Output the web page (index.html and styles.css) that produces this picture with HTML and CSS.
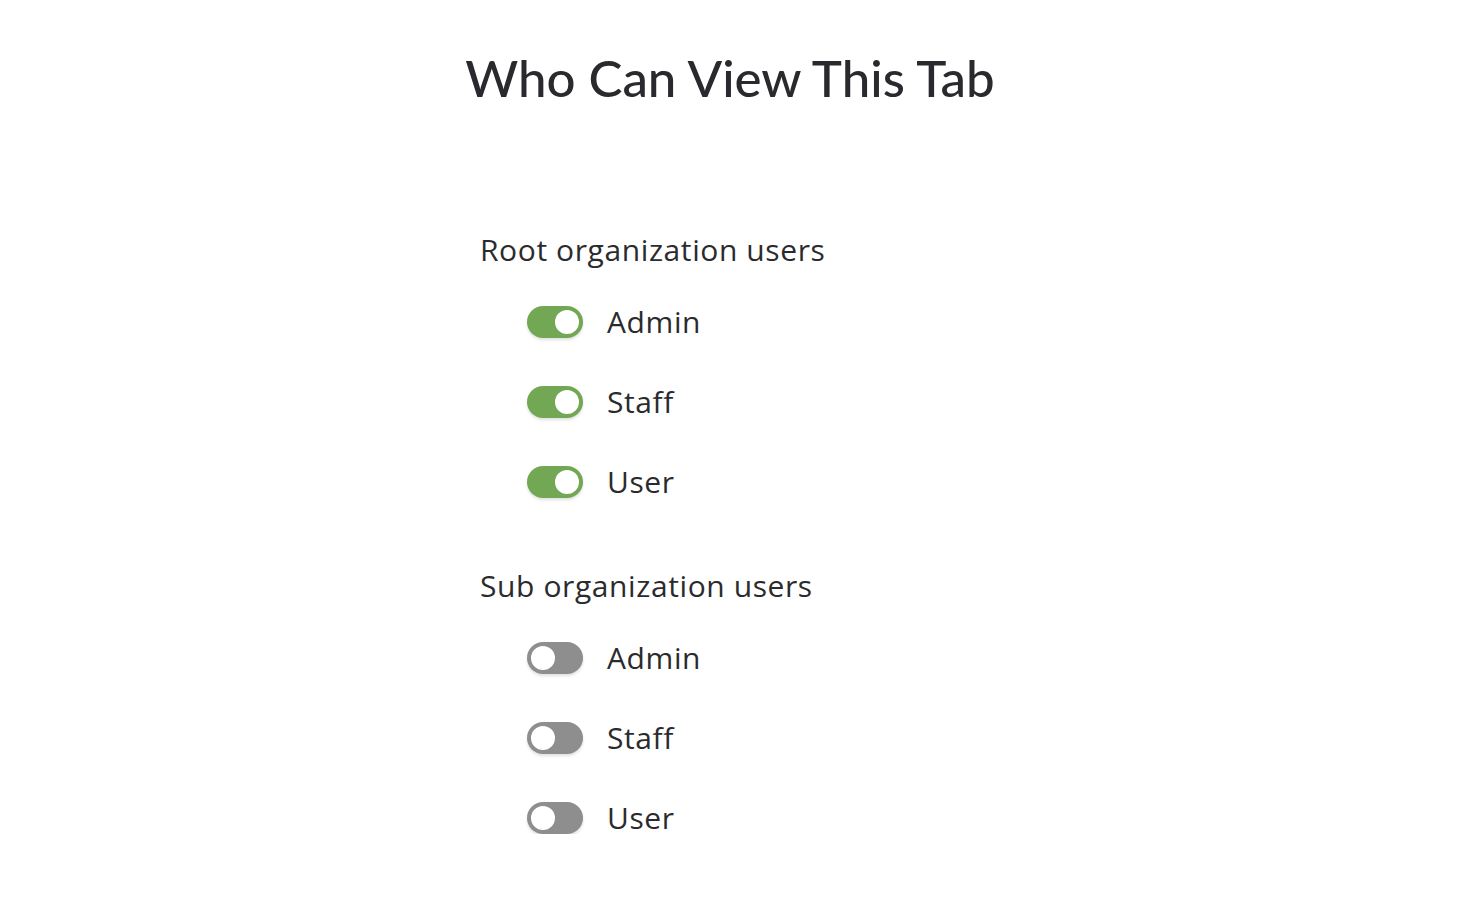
FILE: index.html
```html
<!DOCTYPE html>
<html lang="en">
<head>
<meta charset="utf-8">
<title>Who Can View This Tab</title>
<link rel="stylesheet" href="styles.css">
</head>
<body>
<main class="page">
  <h1 class="title">Who Can View This Tab</h1>
  <section class="group group-first">
    <h2 class="group-title">Root organization users</h2>
    <ul class="options">
      <li class="option"><span class="toggle on"><span class="knob"></span></span><span class="label">Admin</span></li>
      <li class="option"><span class="toggle on"><span class="knob"></span></span><span class="label">Staff</span></li>
      <li class="option"><span class="toggle on"><span class="knob"></span></span><span class="label">User</span></li>
    </ul>
  </section>
  <section class="group">
    <h2 class="group-title">Sub organization users</h2>
    <ul class="options">
      <li class="option"><span class="toggle off"><span class="knob"></span></span><span class="label">Admin</span></li>
      <li class="option"><span class="toggle off"><span class="knob"></span></span><span class="label">Staff</span></li>
      <li class="option"><span class="toggle off"><span class="knob"></span></span><span class="label">User</span></li>
    </ul>
  </section>
</main>
</body>
</html>
```
FILE: styles.css
```css
html, body {
  margin: 0;
  padding: 0;
  background: #ffffff;
}
body {
  font-family: "Open Sans", "Noto Sans", sans-serif;
  color: #2b2b2e;
}
.page {
  width: 500px;
  margin: 0 auto;
  padding-top: 48px;
}
.title {
  margin: 0 -200px;
  text-align: center;
  font-family: "Lato", "Open Sans", sans-serif;
  font-weight: 500;
  font-size: 51px;
  line-height: 60px;
  color: #2a2a2e;
}
.group {
  margin: 0;
}
.group-first {
  margin-top: 118px;
}
.group-title {
  margin: 0;
  font-weight: 400;
  font-size: 30px;
  letter-spacing: 0.6px;
  line-height: 48px;
  color: #2b2b2e;
}
.options {
  list-style: none;
  margin: 0;
  padding: 0 0 0 47px;
  display: flex;
  flex-direction: column;
  gap: 48px;
  margin-top: 32px;
}
.option {
  display: flex;
  align-items: center;
  gap: 24px;
  height: 32px;
}
.group + .group {
  margin-top: 64px;
}
.toggle {
  position: relative;
  width: 56px;
  height: 32px;
  border-radius: 16px;
  box-shadow: 0 2px 3px rgba(0,0,0,0.12);
  flex: none;
}
.toggle.on { background: #72a853; }
.toggle.off { background: #8e8e8e; }
.knob {
  position: absolute;
  top: 4px;
  width: 24px;
  height: 24px;
  border-radius: 50%;
  background: #ffffff;
}
.toggle.on .knob { left: 28px; }
.toggle.off .knob { left: 4px; }
.label {
  font-size: 30px;
  letter-spacing: 0.6px;
  line-height: 32px;
  color: #2b2b2e;
}
```
